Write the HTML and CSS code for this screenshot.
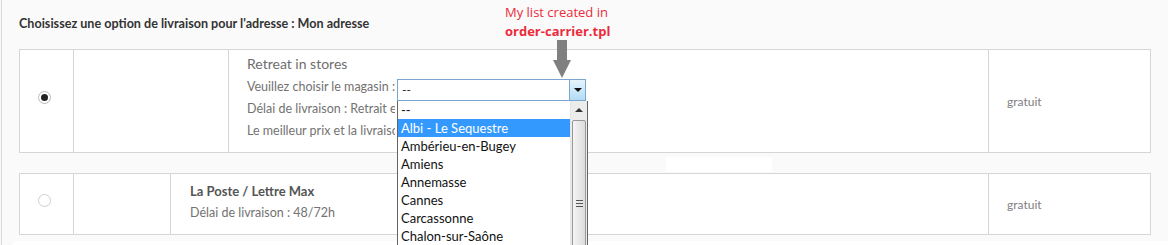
FILE: index.html
```html
<!DOCTYPE html>
<html lang="fr">
<head>
  <meta charset="UTF-8">
  <title>Livraison</title>
  <link rel="stylesheet" href="styles.css">
</head>
<body>
  <div class="page">
    <h3 class="title">Choisissez une option de livraison pour l'adresse : Mon adresse</h3>

    <!-- annotation -->
    <div class="note">My list created in<br><b>order-carrier.tpl</b></div>
    <div class="pointer"></div>

    <div class="carrier">
      <div class="cell c-radio"><span class="radio on"></span></div>
      <div class="cell c-logo"></div>
      <div class="cell c-info store">
        <div class="name">Retreat in stores</div>
        <div class="line">Veuillez choisir le magasin :
          <span class="select">
            <span class="value">--</span>
            <span class="btn"></span>
            <span class="list">
              <span class="opt">--</span>
              <span class="opt sel">Albi - Le Sequestre</span>
              <span class="opt">Ambérieu-en-Bugey</span>
              <span class="opt">Amiens</span>
              <span class="opt">Annemasse</span>
              <span class="opt">Cannes</span>
              <span class="opt">Carcassonne</span>
              <span class="opt">Chalon-sur-Saône</span>
              <span class="scroll"><span class="up"></span><span class="thumb"><span class="grip"></span></span></span>
            </span>
          </span>
        </div>
        <div class="line clip">Délai de livraison : Retrait en magasin</div>
        <div class="line clip">Le meilleur prix et la livraison la plus rapide</div>
      </div>
      <div class="cell c-price">gratuit</div>
    </div>

    <div class="gap"><span class="ghost"></span></div>

    <div class="carrier small">
      <div class="cell c-radio"><span class="radio"></span></div>
      <div class="cell c-logo"></div>
      <div class="cell c-info">
        <div class="name bold">La Poste / Lettre Max</div>
        <div class="line">Délai de livraison : 48/72h</div>
      </div>
      <div class="cell c-price">gratuit</div>
    </div>

    <div class="foot"></div>
  </div>
</body>
</html>
```

FILE: styles.css
```css
body {
  margin: 0;
  background: #fafafa;
  font-family: Lato, "Open Sans", sans-serif;
  color: #727272;
}
.page {
  position: relative;
  margin-left: 1px;
  border-left: 1px solid #d8d8d8;
  padding-left: 17px;
  height: 245px;
  overflow: hidden;
}
.title {
  margin: 0;
  padding-top: 15px;
  height: 34px;
  line-height: 18px;
  font-size: 12.6px;
  font-weight: bold;
  color: #333;
}

/* carrier rows */
.carrier {
  display: grid;
  grid-template-columns: 53px 155px 760px 162px;
  width: 1132px;
  height: 104px;
  box-sizing: border-box;
  border: 1px solid #d6d6d6;
  background: #fff;
}
.carrier.small {
  grid-template-columns: 53px 97px 818px 162px;
  height: 62px;
}
.cell {
  border-left: 1px solid #d6d6d6;
}
.c-radio {
  border-left: none;
  display: flex;
  align-items: center;
  justify-content: center;
}
.radio {
  width: 11px;
  height: 11px;
  border: 1px solid #cfcfcf;
  border-radius: 50%;
  margin: 0 5px 8px 0;
  background: #fff;
  display: flex;
  align-items: center;
  justify-content: center;
}
.radio.on {
  border-color: #b9b9b9;
}
.radio.on::after {
  content: "";
  width: 7px;
  height: 7px;
  border-radius: 50%;
  background: #222;
}
.c-info {
  padding: 4px 0 0 18px;
  font-size: 12.5px;
}
.store .name {
  font-size: 14px;
  line-height: 20px;
  margin-bottom: 2px;
  color: #6e6e6e;
}
.line {
  line-height: 22px;
}
.clip {
  max-width: 148px;
  overflow: hidden;
  white-space: nowrap;
}
.carrier.small .c-info {
  padding: 0 0 4px 19px;
  display: flex;
  flex-direction: column;
  justify-content: center;
}
.carrier.small .line {
  line-height: 21px;
}
.name.bold {
  font-weight: bold;
  font-size: 13px;
  line-height: 21px;
  color: #555;
}
.c-price {
  display: flex;
  align-items: center;
  padding-left: 18px;
  font-size: 12px;
  color: #808080;
}

/* fake select */
.select {
  position: absolute;
  left: 395px;
  top: 79px;
  width: 189px;
  height: 22px;
  box-sizing: border-box;
  border: 1px solid #7aa6d0;
  background: #fff;
  color: #222;
  z-index: 2;
}
.value {
  position: absolute;
  left: 4px;
  top: 0;
  line-height: 20px;
  font-size: 12px;
}
.btn {
  position: absolute;
  right: 0;
  top: 0;
  width: 16px;
  height: 20px;
  box-sizing: border-box;
  border-left: 1px solid #7aa6d0;
  background: linear-gradient(#e6f4fd, #b3dcf5);
}
.btn::after {
  content: "";
  position: absolute;
  left: 4px;
  top: 8px;
  border-left: 4px solid transparent;
  border-right: 4px solid transparent;
  border-top: 4px solid #111;
}
.list {
  position: absolute;
  left: -1px;
  top: 21px;
  width: 191px;
  height: 160px;
  box-sizing: border-box;
  border: 1px solid #646464;
  border-top: none;
  background: #fff;
  font-size: 13px;
  color: #111;
}
.opt {
  display: block;
  width: 172px;
  height: 18px;
  line-height: 18px;
  padding-left: 3px;
  box-sizing: border-box;
}
.opt.sel {
  background: #3399ff;
  color: #fff;
}
.scroll {
  position: absolute;
  right: 0;
  top: 0;
  width: 17px;
  height: 100%;
  background: #ececec;
  border-left: 1px solid #e4e4e4;
  box-sizing: border-box;
}
.up {
  position: absolute;
  left: 4px;
  top: 7px;
  border-left: 4px solid transparent;
  border-right: 4px solid transparent;
  border-bottom: 4px solid #333;
}
.thumb {
  position: absolute;
  left: 1px;
  top: 19px;
  width: 14px;
  height: 150px;
  box-sizing: border-box;
  border: 1px solid #979797;
  border-radius: 2px;
  background: linear-gradient(90deg, #f4f4f4, #dcdcdc);
}
.grip {
  position: absolute;
  left: 3px;
  top: 79px;
  width: 7px;
  height: 7px;
  background: repeating-linear-gradient(#555 0 1px, transparent 1px 3px);
}

/* annotation */
.note {
  position: absolute;
  left: 503px;
  top: 3px;
  font-family: "Open Sans", sans-serif;
  font-size: 13px;
  line-height: 19px;
  color: #ea2b3b;
}
.pointer {
  position: absolute;
  left: 555px;
  top: 40px;
  width: 10px;
  height: 20px;
  background: #808080;
}
.pointer::after {
  content: "";
  position: absolute;
  left: -4px;
  top: 20px;
  border-left: 9px solid transparent;
  border-right: 9px solid transparent;
  border-top: 18px solid #808080;
}

.gap {
  height: 20px;
  position: relative;
}
.ghost {
  position: absolute;
  left: 647px;
  top: 4px;
  width: 106px;
  height: 15px;
  background: #fff;
}
.foot {
  margin: 6px 0 0 -6px;
  height: 10px;
  background: #fff;
}
```
